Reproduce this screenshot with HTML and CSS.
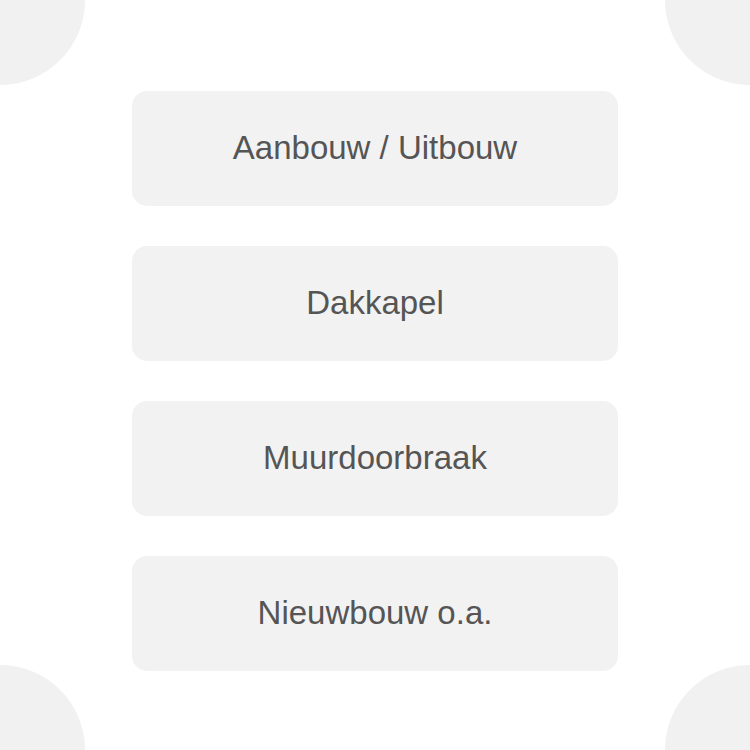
FILE: index.html
```html
<!DOCTYPE html>
<html>
<head>
<meta charset="utf-8">
<link rel="stylesheet" href="styles.css">
</head>
<body>
<main class="list">
  <button class="item">Aanbouw / Uitbouw</button>
  <button class="item">Dakkapel</button>
  <button class="item">Muurdoorbraak</button>
  <button class="item">Nieuwbouw o.a.</button>
</main>
</body>
</html>
```
FILE: styles.css
```css
html, body {
  margin: 0;
  padding: 0;
  width: 750px;
  height: 750px;
  overflow: hidden;
  font-family: "Liberation Sans", Arial, sans-serif;
}
body {
  background:
    radial-gradient(circle 85px at 0 0, #f1f1f1 84.5px, transparent 85.5px),
    radial-gradient(circle 85px at 750px 0, #f1f1f1 84.5px, transparent 85.5px),
    radial-gradient(circle 85px at 0 750px, #f1f1f1 84.5px, transparent 85.5px),
    radial-gradient(circle 85px at 750px 750px, #f1f1f1 84.5px, transparent 85.5px),
    #ffffff;
}
.list {
  display: flex;
  flex-direction: column;
  align-items: center;
  gap: 40px;
  padding-top: 91px;
}
.item {
  width: 486px;
  height: 115px;
  border: none;
  border-radius: 15px;
  background: #f2f2f2;
  color: #555555;
  font-family: "Liberation Sans", Arial, sans-serif;
  font-size: 33px;
  padding: 0 0 2px 0;
  margin: 0;
}
```
